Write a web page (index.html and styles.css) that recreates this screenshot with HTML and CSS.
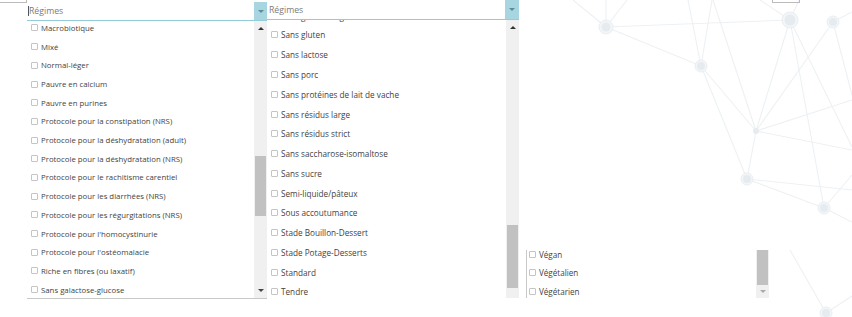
FILE: index.html
```html
<!DOCTYPE html>
<html lang="fr">
<head>
  <meta charset="UTF-8" />
  <title>Régimes</title>
  <link rel="stylesheet" href="styles.css">
</head>
<body>
  <svg class="network" viewBox="0 0 852 317" width="852" height="317">
    <g class="links">
      <line x1="573" y1="0" x2="606" y2="27"/>
      <line x1="606" y1="0" x2="606" y2="27"/>
      <line x1="627" y1="0" x2="606" y2="27"/>
      <line x1="606" y1="27" x2="790" y2="20"/>
      <line x1="606" y1="27" x2="701" y2="66"/>
      <line x1="688" y1="0" x2="701" y2="66"/>
      <line x1="712" y1="0" x2="701" y2="66"/>
      <line x1="701" y1="66" x2="756" y2="131"/>
      <line x1="701" y1="66" x2="747" y2="179"/>
      <line x1="713" y1="0" x2="756" y2="131"/>
      <line x1="760" y1="0" x2="790" y2="20"/>
      <line x1="799" y1="0" x2="790" y2="20"/>
      <line x1="790" y1="20" x2="756" y2="131"/>
      <line x1="790" y1="20" x2="824" y2="208"/>
      <line x1="790" y1="20" x2="852" y2="147"/>
      <line x1="833" y1="22" x2="852" y2="12"/>
      <line x1="833" y1="22" x2="756" y2="131"/>
      <line x1="833" y1="22" x2="852" y2="95"/>
      <line x1="756" y1="131" x2="852" y2="100"/>
      <line x1="756" y1="131" x2="747" y2="179"/>
      <line x1="756" y1="131" x2="852" y2="150"/>
      <line x1="747" y1="179" x2="824" y2="208"/>
      <line x1="747" y1="179" x2="852" y2="190"/>
      <line x1="824" y1="208" x2="852" y2="175"/>
      <line x1="824" y1="208" x2="852" y2="222"/>
      <line x1="790" y1="250" x2="826" y2="313"/>
      <line x1="826" y1="313" x2="852" y2="296"/>
    </g>
    <g class="nodes">
      <circle cx="606" cy="27" r="7" class="ring"/><circle cx="606" cy="27" r="4.5"/>
      <circle cx="701" cy="66" r="6" class="ring"/><circle cx="701" cy="66" r="4"/>
      <circle cx="790" cy="20" r="8" class="ring"/><circle cx="790" cy="20" r="5.5"/>
      <circle cx="833" cy="22" r="6" class="ring"/><circle cx="833" cy="22" r="4"/>
      <circle cx="756" cy="131" r="3"/>
      <circle cx="747" cy="179" r="6" class="ring"/><circle cx="747" cy="179" r="4"/>
      <circle cx="824" cy="208" r="6" class="ring"/><circle cx="824" cy="208" r="4"/>
      <circle cx="826" cy="313" r="6" class="ring"/><circle cx="826" cy="313" r="4"/>
    </g>
  </svg>

  <div class="row">
    <div class="stub stub-left"></div>

    <div class="dropdown dd-one">
      <div class="dd-head">
        <span class="placeholder"><span class="caret"></span>Régimes</span>
        <span class="dd-btn"><span class="tri-down"></span></span>
      </div>
      <div class="dd-list">
        <ul class="items">
          <li><span class="box"></span>Macrobiotique</li>
          <li><span class="box"></span>Mixé</li>
          <li><span class="box"></span>Normal-léger</li>
          <li><span class="box"></span>Pauvre en calcium</li>
          <li><span class="box"></span>Pauvre en purines</li>
          <li><span class="box"></span>Protocole pour la constipation (NRS)</li>
          <li><span class="box"></span>Protocole pour la déshydratation (adult)</li>
          <li><span class="box"></span>Protocole pour la déshydratation (NRS)</li>
          <li><span class="box"></span>Protocole pour le rachitisme carentiel</li>
          <li><span class="box"></span>Protocole pour les diarrhées (NRS)</li>
          <li><span class="box"></span>Protocole pour les régurgitations (NRS)</li>
          <li><span class="box"></span>Protocole pour l'homocystinurie</li>
          <li><span class="box"></span>Protocole pour l'ostéomalacie</li>
          <li><span class="box"></span>Riche en fibres (ou laxatif)</li>
          <li><span class="box"></span>Sans galactose-glucose</li>
        </ul>
        <div class="scrollbar">
          <span class="sb-arrow"><span class="tri-up"></span></span>
          <span class="sb-thumb"></span>
          <span class="sb-fill"></span>
          <span class="sb-arrow sb-arrow-down"><span class="tri-down"></span></span>
        </div>
      </div>
    </div>

    <div class="dropdown dd-two">
      <div class="dd-head">
        <span class="placeholder">Régimes</span>
        <span class="dd-btn"><span class="tri-down"></span></span>
      </div>
      <div class="dd-list">
        <ul class="items">
          <li class="clipped"><span class="clip-text">Sans galactose-glucose</span></li>
          <li><span class="box"></span>Sans gluten</li>
          <li><span class="box"></span>Sans lactose</li>
          <li><span class="box"></span>Sans porc</li>
          <li><span class="box"></span>Sans protéines de lait de vache</li>
          <li><span class="box"></span>Sans résidus large</li>
          <li><span class="box"></span>Sans résidus strict</li>
          <li><span class="box"></span>Sans saccharose-isomaltose</li>
          <li><span class="box"></span>Sans sucre</li>
          <li><span class="box"></span>Semi-liquide/pâteux</li>
          <li><span class="box"></span>Sous accoutumance</li>
          <li><span class="box"></span>Stade Bouillon-Dessert</li>
          <li><span class="box"></span>Stade Potage-Desserts</li>
          <li><span class="box"></span>Standard</li>
          <li><span class="box"></span>Tendre</li>
        </ul>
        <div class="scrollbar">
          <span class="sb-arrow"><span class="tri-up"></span></span>
          <span class="sb-thumb"></span>
          <span class="sb-fill"></span>
        </div>
      </div>
    </div>

    <div class="dropdown dd-three">
      <div class="dd-list">
        <ul class="items">
          <li><span class="box"></span>Végan</li>
          <li><span class="box"></span>Végétalien</li>
          <li><span class="box"></span>Végétarien</li>
        </ul>
        <div class="scrollbar">
          <span class="sb-thumb"></span>
          <span class="sb-arrow sb-arrow-down"><span class="tri-down"></span></span>
        </div>
      </div>
    </div>

    <div class="stub stub-right"></div>
  </div>
</body>
</html>
```

FILE: styles.css
```css
body {
  margin: 0;
  background-color: #fff;
  font-family: "Open Sans", "Noto Sans", sans-serif;
  color: #3f3f3f;
  width: 852px;
  height: 317px;
  overflow: hidden;
}

.network {
  position: absolute;
  top: 0;
  left: 0;
  z-index: 0;
}

.network line {
  stroke: #edf1f4;
  stroke-width: 1.1;
}

.network circle {
  fill: #e6ebf0;
}

.network .ring {
  fill: #f3f6f8;
  stroke: #eaeef2;
  stroke-width: 1;
}

.row {
  position: relative;
  z-index: 1;
  display: flex;
  align-items: flex-start;
}

.stub {
  height: 3px;
  box-sizing: border-box;
  border: 1px solid #bbb;
  border-top: none;
}

.stub-left {
  width: 27px;
  border-left: none;
}

.stub-right {
  width: 28px;
  margin-left: 3px;
}

.dropdown {
  display: flex;
  flex-direction: column;
  background-color: #fff;
}

.dd-head {
  display: flex;
  border-bottom: 1px solid #93cbd8;
  background-color: #fff;
}

.placeholder {
  flex: 1;
  display: flex;
  align-items: center;
  padding-left: 2px;
  font-size: 8.7px;
  color: #7b7b7b;
}

.caret {
  width: 1px;
  height: 10px;
  background-color: #555;
  margin-left: -1px;
}

.dd-btn {
  display: flex;
  align-items: center;
  justify-content: center;
  background-color: #a7d6e1;
}

.dd-btn .tri-down {
  border-top-color: #5b8e9b;
}

.tri-down,
.tri-up {
  width: 0;
  height: 0;
  border-left: 3px solid transparent;
  border-right: 3px solid transparent;
}

.tri-down {
  border-top: 3px solid #444;
}

.tri-up {
  border-bottom: 3px solid #333;
}

.dd-list {
  display: flex;
  overflow: hidden;
  background-color: #fff;
}

.items {
  flex: 1;
  list-style: none;
  margin: 0;
  padding: 0;
}

.items li {
  display: flex;
  align-items: center;
  white-space: nowrap;
}

.box {
  width: 7px;
  height: 7px;
  box-sizing: border-box;
  border: 1px solid #c4c4c4;
  border-radius: 1px;
  background-color: #fff;
  margin-right: 3px;
  flex-shrink: 0;
}

.scrollbar {
  display: flex;
  flex-direction: column;
  background-color: #f0f0f0;
}

.sb-arrow {
  display: flex;
  align-items: center;
  justify-content: center;
  height: 14px;
  flex-shrink: 0;
}

.sb-thumb {
  background-color: #c1c1c1;
  margin: 0 1px;
  flex-shrink: 0;
}

.sb-fill {
  flex: 1;
}

/* first dropdown */
.dd-one {
  width: 240px;
  margin-top: 2px;
}

.dd-one .dd-head {
  height: 18px;
}

.dd-one .dd-btn {
  width: 13px;
}

.dd-one .dd-list {
  height: 277px;
  border-bottom: 1px solid #c8c8c8;
}

.dd-one .items {
  margin-top: -2.4px;
  font-size: 7.8px;
}

.dd-one .items li {
  height: 18.7px;
  padding-left: 4px;
}

.dd-one .scrollbar {
  width: 13px;
}

.dd-one .sb-thumb {
  margin-top: 121px;
  height: 60px;
}

.dd-one .sb-arrow-down {
  height: 16px;
}

/* second dropdown */
.dd-two {
  width: 252px;
}

.dd-two .dd-head {
  height: 19px;
}

.dd-two .dd-btn {
  width: 14px;
}

.dd-two .dd-list {
  height: 278px;
}

.dd-two .items {
  font-size: 8.2px;
}

.dd-two .items li {
  height: 19.77px;
  padding-left: 4px;
}

/* row scrolled up under the header, only its descenders show */
.dd-two .items li.clipped {
  height: 2px;
  margin-bottom: 3.1px;
  padding-left: 14px;
  align-items: flex-start;
  overflow: hidden;
}

.clip-text {
  line-height: 8px;
  margin-top: -7.2px;
}

.dd-two .scrollbar {
  width: 13px;
}

.dd-two .sb-thumb {
  margin-top: 191px;
  height: 63px;
}

/* third dropdown */
.dd-three {
  width: 243px;
  margin-top: 250px;
  margin-left: 7px;
}

.dd-three .dd-list {
  height: 48px;
  border-left: 1px solid #c8c8c8;
}

.dd-three .items {
  margin-top: -5.2px;
  font-size: 8.1px;
}

.dd-three .items li {
  height: 18.5px;
  padding-left: 2px;
}

.dd-three .scrollbar {
  width: 13px;
}

.dd-three .sb-thumb {
  height: 35px;
}

.dd-three .sb-arrow-down {
  height: 13px;
}

.dd-three .tri-down {
  border-top-color: #aaa;
}
```
